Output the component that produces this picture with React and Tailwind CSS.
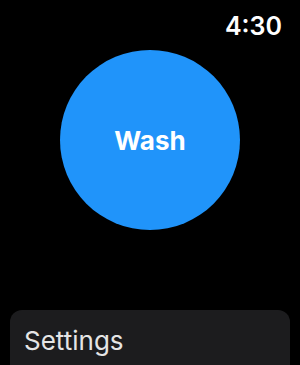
import React from 'react';

export default function App() {
    return (
        <div className="h-[365px] w-[300px] overflow-hidden bg-black" style={{ fontFamily: 'Inter, "Noto Sans", sans-serif' }}>
            <div className="flex h-[50px] items-start justify-end pr-[18px] pt-[11px]">
                <span className="text-[25px] font-semibold leading-[30px] text-white">4:30</span>
            </div>
            <div className="flex justify-center">
                <button className="flex h-[180px] w-[180px] items-center justify-center rounded-full bg-[#2094fa]">
                    <span className="text-[26px] font-bold text-white">Wash</span>
                </button>
            </div>
            <div className="mt-[80px] px-[10px]">
                <div className="flex h-[80px] items-start rounded-[12px] bg-[#1c1c1e] px-[14px] pt-[16px]">
                    <span className="text-[26px] leading-[30px] text-[#e5e5e5]">Settings</span>
                </div>
            </div>
        </div>
    );
}
